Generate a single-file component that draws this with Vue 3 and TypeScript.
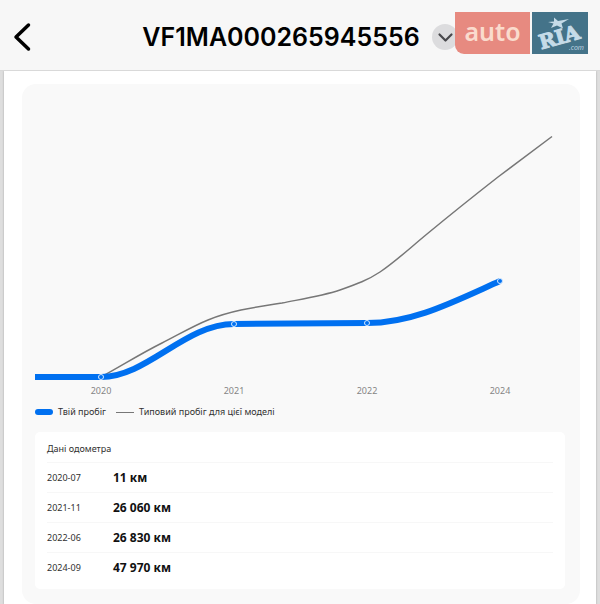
<script setup lang="ts">
interface Reading {
  date: string
  value: string
}

interface Point {
  year: string
  x: number
  y: number
}

const vin = 'VF1MA000265945556'

const readings: Reading[] = [
  { date: '2020-07', value: '11 км' },
  { date: '2021-11', value: '26 060 км' },
  { date: '2022-06', value: '26 830 км' },
  { date: '2024-09', value: '47 970 км' },
]

const points: Point[] = [
  { year: '2020', x: 66, y: 293 },
  { year: '2021', x: 199, y: 240 },
  { year: '2022', x: 332, y: 239 },
  { year: '2024', x: 465, y: 197 },
]
</script>

<template>
  <div class="page">
    <header class="topbar">
      <button class="back" type="button" aria-label="Назад">
        <svg width="20" height="32" viewBox="0 0 20 32" aria-hidden="true">
          <path d="M16.500 4 L4 16 L16.500 28" />
        </svg>
      </button>
      <div class="heading">
        <h1>{{ vin }}</h1>
        <button class="expand" type="button" aria-label="Показати більше">
          <svg width="26" height="26" viewBox="0 0 26 26" aria-hidden="true">
            <path d="M7.500 10.500 L13.500 16.500 L19.500 10.500" />
          </svg>
        </button>
      </div>
      <a class="brand" href="#" aria-label="auto RIA.com">
        <span class="brand-auto">auto</span>
        <svg class="brand-ria" width="56" height="42" viewBox="0 0 56 42" aria-hidden="true">
          <rect width="56" height="42" />
          <path class="star" d="M22 5.500 L26 9 L37 7 L29.500 11.500 L31 16.500 L25 13.500 L19 16 L21.500 11.500 L16 10 L22 9.500 Z" />
          <g transform="rotate(-16 28 28)">
            <text class="ria" x="28" y="32" text-anchor="middle">RIA</text>
          </g>
          <text class="com" x="37" y="38">.com</text>
        </svg>
      </a>
    </header>

    <main class="sheet">
      <section class="card">
        <svg class="chart" viewBox="0 0 530 316" role="img" aria-label="Графік пробігу">
          <path class="typical" d="M66 293 C88 281 105 270 127 259 C143 251 158 242 173 236 C198 226 222 223 247 219 C267 215 287 212 305 206 C322 200 333 196 345 188 C360 178 375 164 392 150 C415 131 440 111 463 93 L517 52.500" />
          <path class="own" d="M0 293 H66 C112 293 150 240 199 240 L332 239 C378 239 418 218 465 197" />
          <g v-for="p in points" :key="p.year">
            <circle class="dot" :cx="p.x" :cy="p.y" r="2.500" />
            <text class="year" :x="p.x" y="310" text-anchor="middle">{{ p.year }}</text>
          </g>
        </svg>

        <ul class="legend">
          <li><span class="key key-own"></span>Твій пробіг</li>
          <li><span class="key key-typical"></span>Типовий пробіг для цієї моделі</li>
        </ul>

        <div class="panel">
          <table>
            <caption>Дані одометра</caption>
            <tbody>
              <tr v-for="r in readings" :key="r.date">
                <th scope="row">{{ r.date }}</th>
                <td>{{ r.value }}</td>
              </tr>
            </tbody>
          </table>
        </div>
      </section>
    </main>
  </div>
</template>

<style>
body {
  margin: 0;
  background: #dedede;
}
</style>

<style scoped>
.page {
  box-sizing: border-box;
  font-family: "Noto Sans", "Open Sans", sans-serif;
  font-size: 9px;
  color: #303030;
}

.topbar {
  position: relative;
  display: grid;
  grid-template-columns: 1fr auto 1fr;
  align-items: center;
  height: 71px;
  padding: 4px 12px 0;
  box-sizing: border-box;
  background: #f7f7f7;
  border-bottom: 1px solid #d9d9d9;
}

button {
  padding: 0;
  border: 0;
  background: none;
  cursor: pointer;
}

svg {
  display: block;
}

.back {
  justify-self: start;
}

.back path {
  fill: none;
  stroke: #000;
  stroke-width: 3.500;
  stroke-linecap: round;
  stroke-linejoin: round;
}

.heading {
  display: flex;
  align-items: center;
  gap: 12px;
}

h1 {
  margin: 0;
  font-family: Inter, sans-serif;
  font-size: 25px;
  line-height: 32px;
  font-weight: 600;
  color: #000;
}

.expand {
  border-radius: 50%;
  background: #dcdcde;
}

.expand path {
  fill: none;
  stroke: #48484c;
  stroke-width: 2.200;
  stroke-linecap: round;
  stroke-linejoin: round;
}

.brand {
  position: absolute;
  top: 12px;
  right: 12px;
  display: flex;
  gap: 2px;
  text-decoration: none;
}

.brand-auto {
  width: 75px;
  height: 42px;
  border-radius: 0 0 0 9px;
  background: #e78a80;
  color: #fadbcd;
  font-size: 25px;
  line-height: 38px;
  font-weight: 600;
  text-align: center;
}

.brand-ria rect {
  fill: #447389;
}

.star,
.ria,
.com {
  fill: #c5dbe8;
}

.ria {
  font: bold 20px "DejaVu Serif", serif;
  stroke: #c5dbe8;
  stroke-width: 1;
}

.com {
  font: italic 7px "Open Sans", sans-serif;
}

.sheet {
  margin: 0 4px;
  padding: 13px 16px 1px 18px;
  background: #fff;
  box-shadow: 0 0 2px #a8a8a8;
  clip-path: inset(0 -4px);
}

.card {
  padding: 0 15px 15px 13px;
  border-radius: 14px;
  background: #f9f9f9;
}

.chart {
  width: 100%;
  height: auto;
}

.own,
.typical {
  fill: none;
}

.own {
  stroke: #0070f0;
  stroke-width: 6;
}

.typical {
  stroke: #777;
  stroke-width: 1.500;
}

.dot {
  fill: #0070f0;
  stroke: #d4e8ff;
  stroke-width: 1;
}

.year {
  font-size: 9px;
  fill: #858585;
}

.legend {
  display: flex;
  gap: 10px;
  margin: 0;
  padding: 4px 0 12px;
  list-style: none;
  line-height: 16px;
}

.legend li {
  display: flex;
  align-items: center;
  gap: 5px;
}

.key {
  width: 18px;
}

.key-own {
  height: 6px;
  border-radius: 3px;
  background: #0070f0;
}

.key-typical {
  height: 1px;
  background: #777;
}

.panel {
  padding: 8px 12px 7px;
  border-radius: 5px;
  background: #fff;
}

table {
  width: 100%;
  border-collapse: collapse;
}

caption {
  padding-bottom: 4px;
  text-align: left;
  line-height: 18px;
}

th,
td {
  height: 29px;
  padding: 0;
  border-top: 1px solid #f7f7f7;
  text-align: left;
}

th {
  width: 66px;
  font-weight: 400;
}

td {
  font-size: 12px;
  font-weight: 700;
  color: #111;
}
</style>
